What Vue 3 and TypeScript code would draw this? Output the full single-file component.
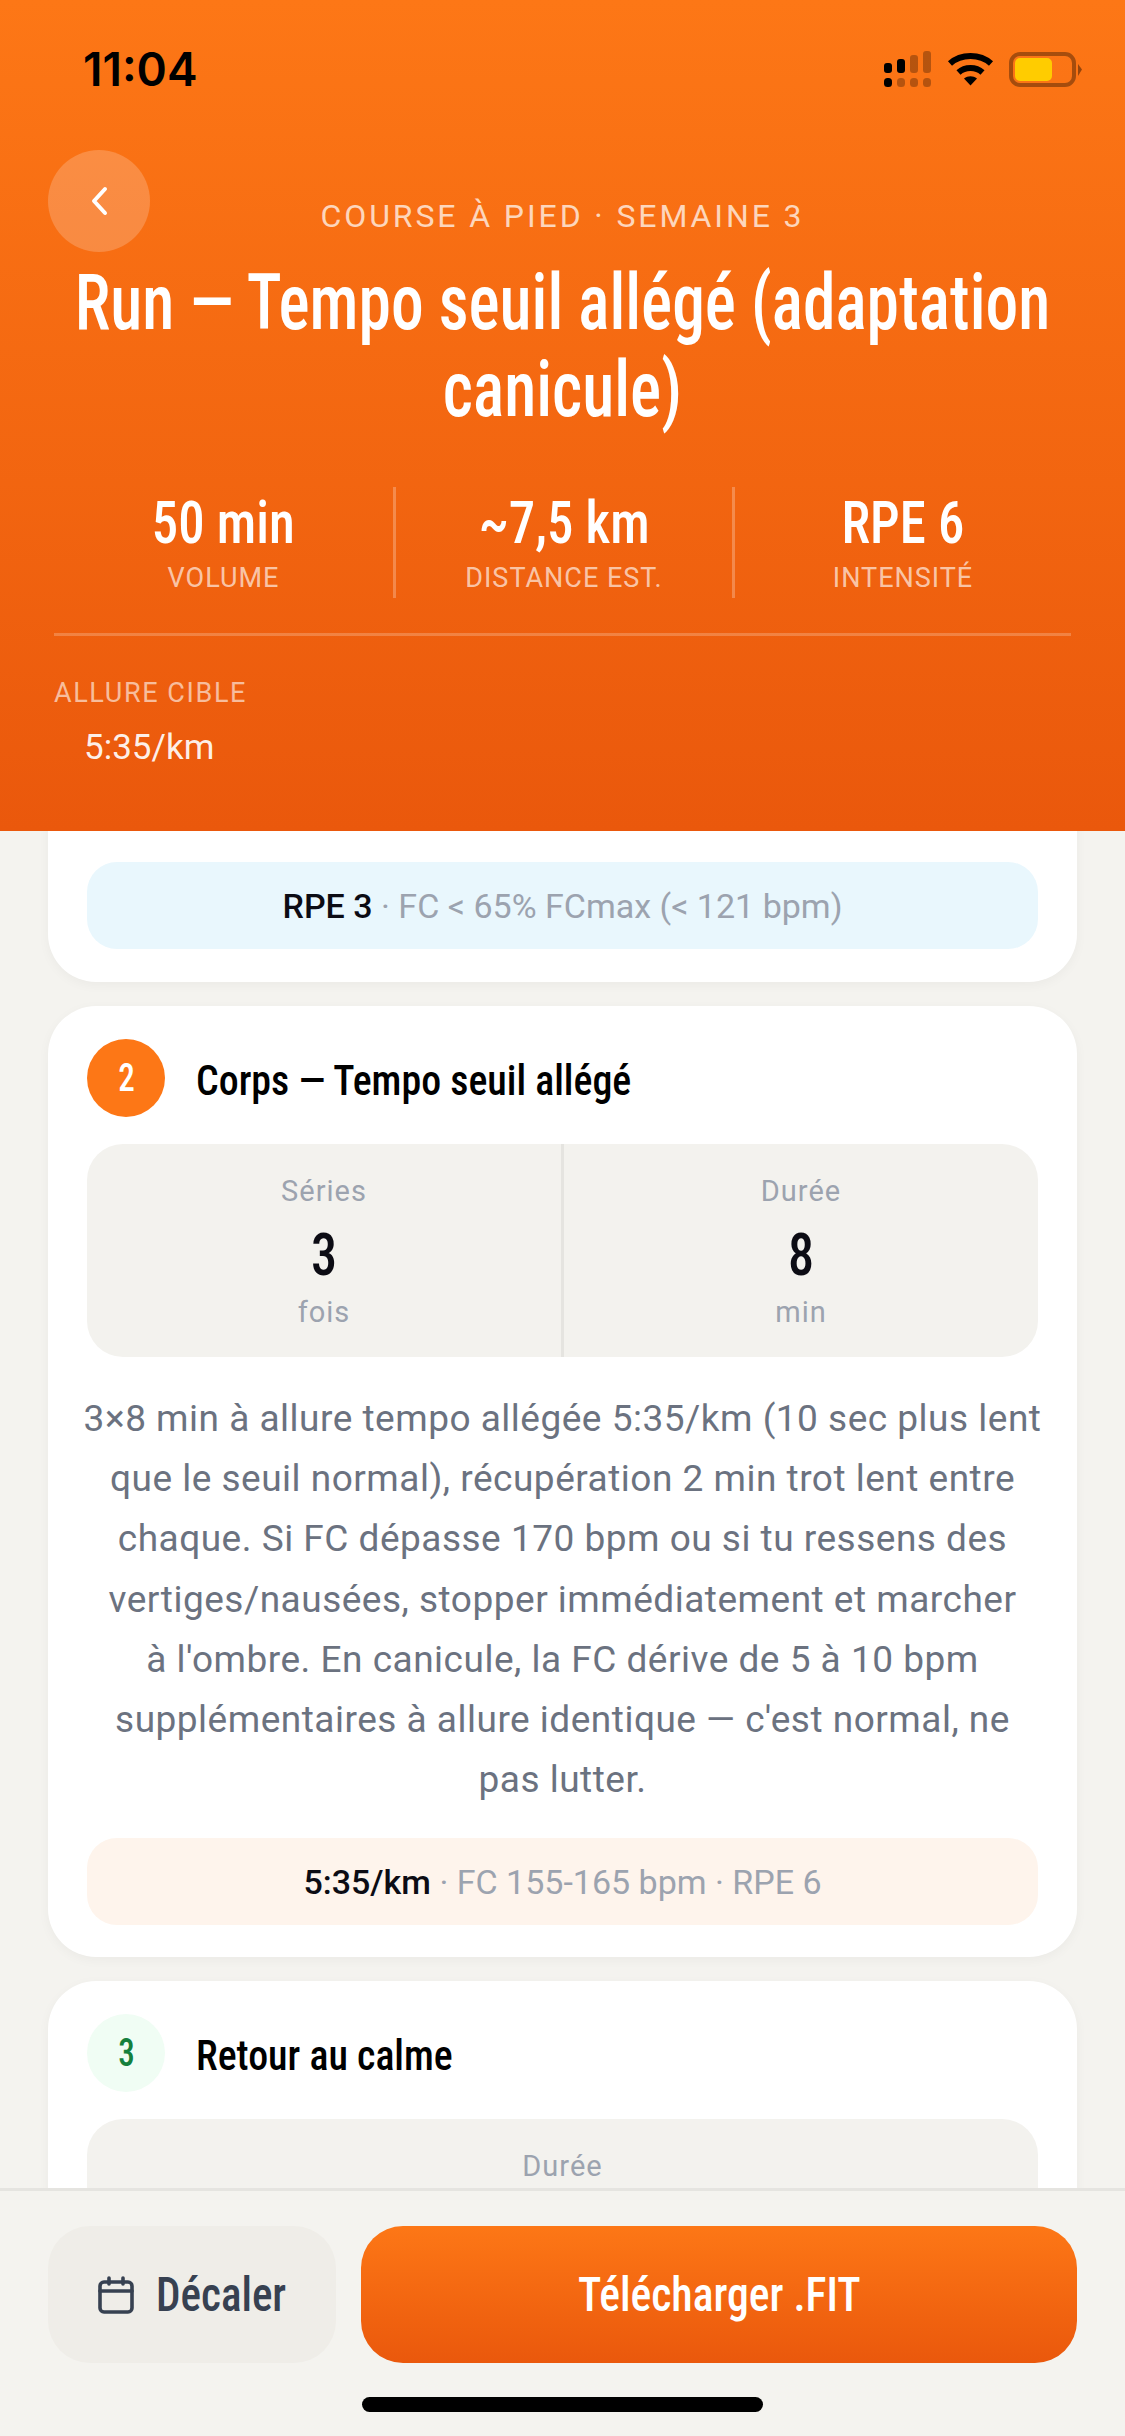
<template>
  <div class="session-view">
    <header class="hero">
      <div class="status-bar">
        <span class="clock">11:04</span>
        <svg class="status-icons" width="198" height="36" viewBox="0 0 198 36">
          <g fill="#000">
            <rect x="0" y="12" width="8" height="10" rx="3" />
            <rect x="13" y="8" width="8" height="14" rx="3" />
            <rect x="0" y="27" width="8" height="9" rx="3.5" />
          </g>
          <g fill="#000" fill-opacity="0.28">
            <rect x="26" y="4" width="8" height="18" rx="3" />
            <rect x="39" y="0" width="8" height="22" rx="3" />
            <rect x="13" y="27" width="8" height="9" rx="3.5" />
            <rect x="26" y="27" width="8" height="9" rx="3.5" />
            <rect x="39" y="27" width="8" height="9" rx="3.5" />
          </g>
          <path d="M66 12.5C77 2.5 96 2.5 107 12.5" fill="none" stroke="#000" stroke-width="6" />
          <path d="M74.5 21.5C81 15.5 92 15.5 98.5 21.5" fill="none" stroke="#000" stroke-width="6" />
          <path d="M80 27.5C84 24.5 89 24.5 93 27.5L86.5 34.5Z" fill="#000" />
          <rect x="127" y="3" width="63" height="31" rx="9" fill="none" stroke="#000" stroke-opacity="0.34" stroke-width="4" />
          <rect x="131" y="7" width="37" height="23" rx="5" fill="#ffcc00" />
          <path d="M194 13L198 18.5L194 25Z" fill="#000" fill-opacity="0.4" />
        </svg>
      </div>

      <button class="back-btn" type="button" aria-label="Retour">
        <svg width="30" height="32" viewBox="0 0 30 32" fill="none">
          <path d="M21 4L10 16L21 28" stroke="#fff" stroke-width="4" stroke-linecap="round" stroke-linejoin="round" />
        </svg>
      </button>

      <p class="eyebrow">COURSE À PIED · SEMAINE 3</p>
      <h1 class="title">
        <span>Run — Tempo seuil allégé (adaptation</span>
        <span>canicule)</span>
      </h1>

      <div class="stats">
        <div v-for="stat in stats" :key="stat.label" class="stat">
          <span class="stat-value">{{ stat.value }}</span>
          <span class="stat-label">{{ stat.label }}</span>
        </div>
      </div>

      <div class="pace">
        <span class="pace-label">ALLURE CIBLE</span>
        <span class="pace-value">5:35/km</span>
      </div>
    </header>

    <main class="steps">
      <section class="card card-first">
        <div class="target target-blue">
          <span><strong>RPE 3</strong> · FC &lt; 65% FCmax (&lt; 121 bpm)</span>
        </div>
      </section>

      <section class="card">
        <div class="card-head">
          <span class="step-num step-orange"><span>2</span></span>
          <h2>Corps — Tempo seuil allégé</h2>
        </div>
        <div class="metrics">
          <div class="metric">
            <span class="metric-label">Séries</span>
            <span class="metric-value">3</span>
            <span class="metric-unit">fois</span>
          </div>
          <div class="metric">
            <span class="metric-label">Durée</span>
            <span class="metric-value">8</span>
            <span class="metric-unit">min</span>
          </div>
        </div>
        <p class="description">
          <span v-for="line in descriptionLines" :key="line">{{ line }}</span>
        </p>
        <div class="target target-orange">
          <span><strong>5:35/km</strong> · FC 155-165 bpm · RPE 6</span>
        </div>
      </section>

      <section class="card">
        <div class="card-head">
          <span class="step-num step-green"><span>3</span></span>
          <h2>Retour au calme</h2>
        </div>
        <div class="metrics">
          <div class="metric">
            <span class="metric-label">Durée</span>
          </div>
        </div>
      </section>
    </main>

    <footer class="actions">
      <div class="action-row">
        <button class="btn-shift" type="button">
          <svg width="36" height="38" viewBox="0 0 36 38" fill="none" stroke="#374151" stroke-width="3.6" stroke-linecap="round" stroke-linejoin="round">
            <rect x="2" y="6" width="32" height="30" rx="4" />
            <path d="M2 15H34M11 2V8M25 2V8" />
          </svg>
          <span>Décaler</span>
        </button>
        <button class="btn-download" type="button"><span>Télécharger .FIT</span></button>
      </div>
      <div class="home-bar"></div>
    </footer>
  </div>
</template>

<script setup lang="ts">
const stats = [
  { value: '50 min', label: 'VOLUME' },
  { value: '~7,5 km', label: 'DISTANCE EST.' },
  { value: 'RPE 6', label: 'INTENSITÉ' }
]

const descriptionLines = [
  '3×8 min à allure tempo allégée 5:35/km (10 sec plus lent',
  'que le seuil normal), récupération 2 min trot lent entre',
  'chaque. Si FC dépasse 170 bpm ou si tu ressens des',
  'vertiges/nausées, stopper immédiatement et marcher',
  "à l'ombre. En canicule, la FC dérive de 5 à 10 bpm",
  "supplémentaires à allure identique — c'est normal, ne",
  'pas lutter.'
]
</script>

<style>
html,
body {
  margin: 0;
  background: #f4f3ef;
}
</style>

<style scoped>
.session-view {
  width: 1125px;
  height: 2436px;
  display: flex;
  flex-direction: column;
  overflow: hidden;
  background: #f4f3ef;
  font-family: Roboto, "Liberation Sans", sans-serif;
}

.hero {
  position: relative;
  z-index: 2;
  height: 831px;
  box-sizing: border-box;
  padding: 0 54px;
  flex-shrink: 0;
  color: #fff;
  background: linear-gradient(180deg, #fd7716 0%, #ea580c 100%);
}

.status-bar {
  height: 134px;
  display: flex;
  justify-content: space-between;
  align-items: flex-start;
  margin: 0 -11px 0 29px;
}

.clock {
  margin-top: 42px;
  font-family: Inter, sans-serif;
  font-size: 46px;
  line-height: 54px;
  font-weight: 600;
  color: #000;
}

.status-icons {
  margin-top: 51px;
}

.back-btn {
  position: absolute;
  left: 48px;
  top: 150px;
  width: 102px;
  height: 102px;
  padding: 0;
  display: flex;
  align-items: center;
  justify-content: center;
  border: none;
  border-radius: 50%;
  background: rgba(255, 255, 255, 0.2);
}

.eyebrow {
  margin: 62px 0 0;
  text-align: center;
  font-size: 32px;
  line-height: 40px;
  letter-spacing: 2.9px;
  color: rgba(255, 255, 255, 0.72);
}

.title {
  display: flex;
  flex-direction: column;
  align-items: center;
  margin: 23px 0 0;
  white-space: nowrap;
  font-family: "Roboto Condensed", "Liberation Sans", sans-serif;
  font-size: 78px;
  line-height: 87px;
  font-weight: 500;
  transform: scaleX(0.84);
}

.stats {
  display: grid;
  grid-template-columns: repeat(3, 1fr);
  margin-top: 54px;
  padding-bottom: 35px;
  border-bottom: 3px solid rgba(255, 255, 255, 0.22);
}

.stat {
  height: 111px;
  display: flex;
  flex-direction: column;
  align-items: center;
  border-left: 3px solid rgba(255, 255, 255, 0.25);
}

.stat:first-child {
  border-left: none;
}

.stat-value {
  font-family: "Roboto Condensed", "Liberation Sans", sans-serif;
  font-size: 60px;
  line-height: 72px;
  font-weight: 500;
  transform: scaleX(0.88);
}

.stat-label {
  font-size: 27px;
  line-height: 38px;
  letter-spacing: 1px;
  color: rgba(255, 255, 255, 0.65);
}

.pace {
  display: flex;
  flex-direction: column;
  align-items: flex-start;
  margin-top: 39px;
}

.pace-label {
  font-size: 27px;
  line-height: 36px;
  letter-spacing: 1.6px;
  color: rgba(255, 255, 255, 0.6);
}

.pace-value {
  margin: 14px 0 0 30px;
  font-size: 35px;
  line-height: 46px;
  color: rgba(255, 255, 255, 0.92);
}

.steps {
  flex: 1;
  min-height: 0;
  overflow: hidden;
  display: flex;
  flex-direction: column;
  gap: 24px;
  padding: 0 48px;
}

.card {
  flex-shrink: 0;
  padding: 33px 39px 32px;
  border-radius: 48px;
  background: #fff;
  box-shadow: 0 3px 12px rgba(0, 0, 0, 0.04);
}

.card-first {
  margin-top: -60px;
  padding-top: 91px;
  padding-bottom: 33px;
}

.card-head {
  display: flex;
  align-items: center;
  gap: 31px;
  margin-bottom: 27px;
}

.card-head h2 {
  margin: 5px 0 0;
  font-family: "Roboto Condensed", "Liberation Sans", sans-serif;
  font-size: 42px;
  line-height: 54px;
  font-weight: 500;
  transform: scaleX(0.95);
  transform-origin: left center;
}

.step-num {
  width: 78px;
  height: 78px;
  flex-shrink: 0;
  display: flex;
  align-items: center;
  justify-content: center;
  border-radius: 50%;
  font-family: "Roboto Condensed", "Liberation Sans", sans-serif;
  font-size: 38px;
  font-weight: 500;
}

.step-num span {
  transform: scaleX(0.87);
}

.step-orange {
  color: #fff;
  background: #fd7716;
}

.step-green {
  color: #15803d;
  background: #f0fdf4;
}

.metrics {
  display: flex;
  border-radius: 36px;
  overflow: hidden;
  background: #f3f2ee;
}

.metric {
  flex: 1;
  height: 213px;
  display: flex;
  flex-direction: column;
  align-items: center;
  padding-top: 28px;
  box-sizing: border-box;
}

.metric + .metric {
  border-left: 3px solid #e5e4e0;
}

.metric-label,
.metric-unit {
  font-size: 29px;
  line-height: 38px;
  letter-spacing: 1px;
  color: #9ca3af;
}

.metric-value {
  margin: 9px 0 2px;
  font-family: "Roboto Condensed", "Liberation Sans", sans-serif;
  font-size: 60px;
  line-height: 72px;
  font-weight: 500;
  color: #0c0c14;
  transform: scaleX(0.87);
}

.description {
  display: flex;
  flex-direction: column;
  align-items: center;
  margin: 32px 0 28px;
  font-size: 37px;
  line-height: 60.2px;
  letter-spacing: 0.5px;
  white-space: nowrap;
  color: #6b7280;
}

.target {
  height: 87px;
  display: flex;
  align-items: center;
  justify-content: center;
  border-radius: 30px;
  font-size: 34px;
  color: #9ca3af;
}

.target strong {
  font-weight: 500;
  color: #0c0c14;
}

.target-blue {
  background: #e9f7fd;
}

.target-orange {
  background: #fef4ec;
}

.actions {
  flex-shrink: 0;
  height: 248px;
  box-sizing: border-box;
  position: relative;
  z-index: 2;
  padding: 35px 48px 0;
  border-top: 3px solid #e5e4e0;
  background: #f4f3ef;
}

.action-row {
  display: flex;
  gap: 25px;
}

.btn-shift,
.btn-download {
  height: 137px;
  display: flex;
  align-items: center;
  justify-content: center;
  border: none;
  border-radius: 42px;
  font-family: "Roboto Condensed", "Liberation Sans", sans-serif;
  font-size: 48px;
  font-weight: 500;
}

.btn-shift {
  width: 288px;
  gap: 22px;
  color: #374151;
  background: #efede8;
}

.btn-shift span {
  width: 130px;
  white-space: nowrap;
  transform: scaleX(0.9);
  transform-origin: left center;
}

.btn-download {
  flex: 1;
  color: #fff;
  background: linear-gradient(180deg, #fd7716 0%, #ea580c 100%);
}

.btn-download span {
  transform: scaleX(0.91);
}

.home-bar {
  width: 401px;
  height: 15px;
  margin: 34px auto 0;
  border-radius: 8px;
  background: #000;
}
</style>
